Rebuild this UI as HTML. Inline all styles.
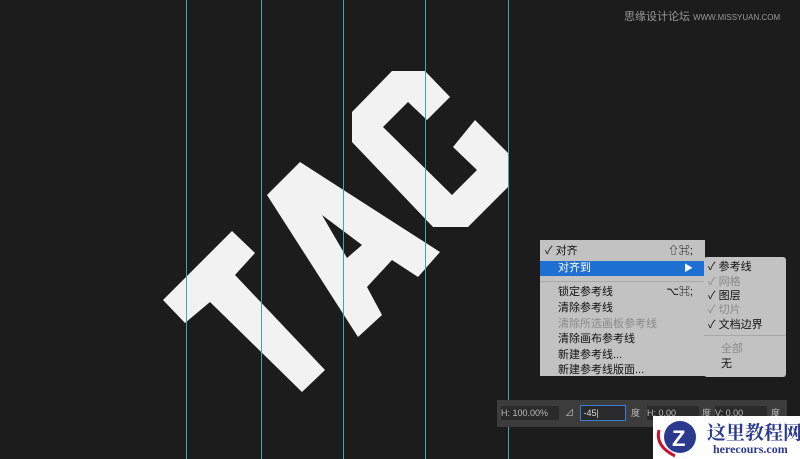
<!DOCTYPE html>
<html><head><meta charset="utf-8"><style>
body{margin:0;width:800px;height:459px;background:#1c1c1c;overflow:hidden;position:relative;font-family:"Liberation Sans","Noto Sans CJK SC",sans-serif}
.g{position:absolute;top:0;width:1px;height:459px;background:#3aa8b4}
.m{position:absolute;font-size:11px;color:#111;line-height:15px}
.r{position:absolute;left:0;right:0;height:15px}
.d{color:#8a8a8a}
</style></head><body>
<svg width="800" height="459" style="position:absolute;left:0;top:0">
<g fill="#f2f2f2">
<polygon points="163,300 232,231 255,253 235,275 325,370 302,392 210,302 185,323"/>
<path fill-rule="evenodd" d="M267,195 L300,162 L440,252 L418,277 L392,260 L367,287 L382,315 L358,337 Z M322,215 L362,245 L347,258 Z"/>
<polygon points="352,112 392,71 425,71 450,97 427,120 408,102 383,127 452,195 477,170 453,147 475,120 508,153 508,187 468,227 433,227 352,142"/>
</g>
<g stroke="#3aa8b4" stroke-width="1">
<line x1="186.5" y1="0" x2="186.5" y2="459"/><line x1="261.5" y1="0" x2="261.5" y2="459"/><line x1="343.5" y1="0" x2="343.5" y2="459"/><line x1="425.5" y1="0" x2="425.5" y2="459"/><line x1="508.5" y1="0" x2="508.5" y2="459"/>
</g>
</svg>
<div style="position:absolute;left:624px;top:8px;font-size:11px;color:#999;letter-spacing:0">思缘设计论坛 <span style="font-size:8px">WWW.MISSYUAN.COM</span></div>
<div class="m" style="left:540px;top:240px;width:165px;height:136px;background:#c2c2c2">
<div class="r" style="top:4px"><span style="position:absolute;left:5px">✓ 对齐</span><span style="position:absolute;right:12px">⇧⌘;</span></div>
<div class="r" style="top:21px;background:#1d6fd1;color:#fff"><span style="position:absolute;left:18px">对齐到</span><span style="position:absolute;right:12px;font-size:9px">▶</span></div>
<div style="position:absolute;left:0;right:0;top:41px;height:1px;background:#a8a8a8"></div>
<div class="r" style="top:45px"><span style="position:absolute;left:18px">锁定参考线</span><span style="position:absolute;right:12px">⌥⌘;</span></div>
<div class="r" style="top:61px;left:18px">清除参考线</div>
<div class="r d" style="top:77px;left:18px">清除所选画板参考线</div>
<div class="r" style="top:92px;left:18px">清除画布参考线</div>
<div class="r" style="top:108px;left:18px">新建参考线...</div>
<div class="r" style="top:123px;left:18px">新建参考线版面...</div>
</div>
<div class="m" style="left:704px;top:257px;width:82px;height:120px;background:#c2c2c2;border-radius:3px">
<div class="r" style="top:3px;left:4px">✓ 参考线</div>
<div class="r d" style="top:18px;left:4px">✓ 网格</div>
<div class="r" style="top:32px;left:4px">✓ 图层</div>
<div class="r d" style="top:46px;left:4px">✓ 切片</div>
<div class="r" style="top:61px;left:4px">✓ 文档边界</div>
<div style="position:absolute;left:0;right:0;top:78px;height:1px;background:#a8a8a8"></div>
<div class="r d" style="top:85px;left:17px">全部</div>
<div class="r" style="top:100px;left:17px">无</div>
</div>
<div style="position:absolute;left:497px;top:400px;width:290px;height:27px;background:#3c3c3c;font-size:9px;color:#bbb">
<div style="position:absolute;left:4px;top:6px;width:58px;height:14px;background:#2a2a2a;line-height:14px">H: 100.00%</div>
<div style="position:absolute;left:68px;top:6px;line-height:14px">⊿</div>
<div style="position:absolute;left:83px;top:5px;width:44px;height:14px;background:#2a2a2a;border:1px solid #3a7bd5;line-height:14px;color:#ddd">&nbsp;-45|</div>
<div style="position:absolute;left:134px;top:6px;line-height:14px">度</div>
<div style="position:absolute;left:150px;top:6px;width:52px;height:14px;background:#2a2a2a;line-height:14px">H: 0.00</div>
<div style="position:absolute;left:205px;top:6px;line-height:14px">度</div>
<div style="position:absolute;left:218px;top:6px;width:52px;height:14px;background:#2a2a2a;line-height:14px">V: 0.00</div>
<div style="position:absolute;left:274px;top:6px;line-height:14px">度</div>
</div>
<div style="position:absolute;left:653px;top:416px;width:147px;height:43px;background:#fff">
<svg width="50" height="43" style="position:absolute;left:0;top:0">
<path d="M6 14 Q2 30 22 40" stroke="#c8102e" stroke-width="3" fill="none"/>
<circle cx="27" cy="21" r="16" fill="#2b3a8f"/>
<text x="19" y="30" font-size="22" font-weight="bold" fill="#fff" font-family="Liberation Sans">Z</text>
</svg>
<div style="position:absolute;left:54px;top:2px;font-size:19px;font-weight:bold;color:#2b3a8f;font-family:'Liberation Serif','Noto Serif CJK SC',serif;white-space:nowrap">这里教程网</div>
<div style="position:absolute;left:60px;top:26px;font-size:12px;font-weight:bold;color:#2b3a8f;font-family:'Liberation Serif',serif">herecours.com</div>
</div>
</body></html>
